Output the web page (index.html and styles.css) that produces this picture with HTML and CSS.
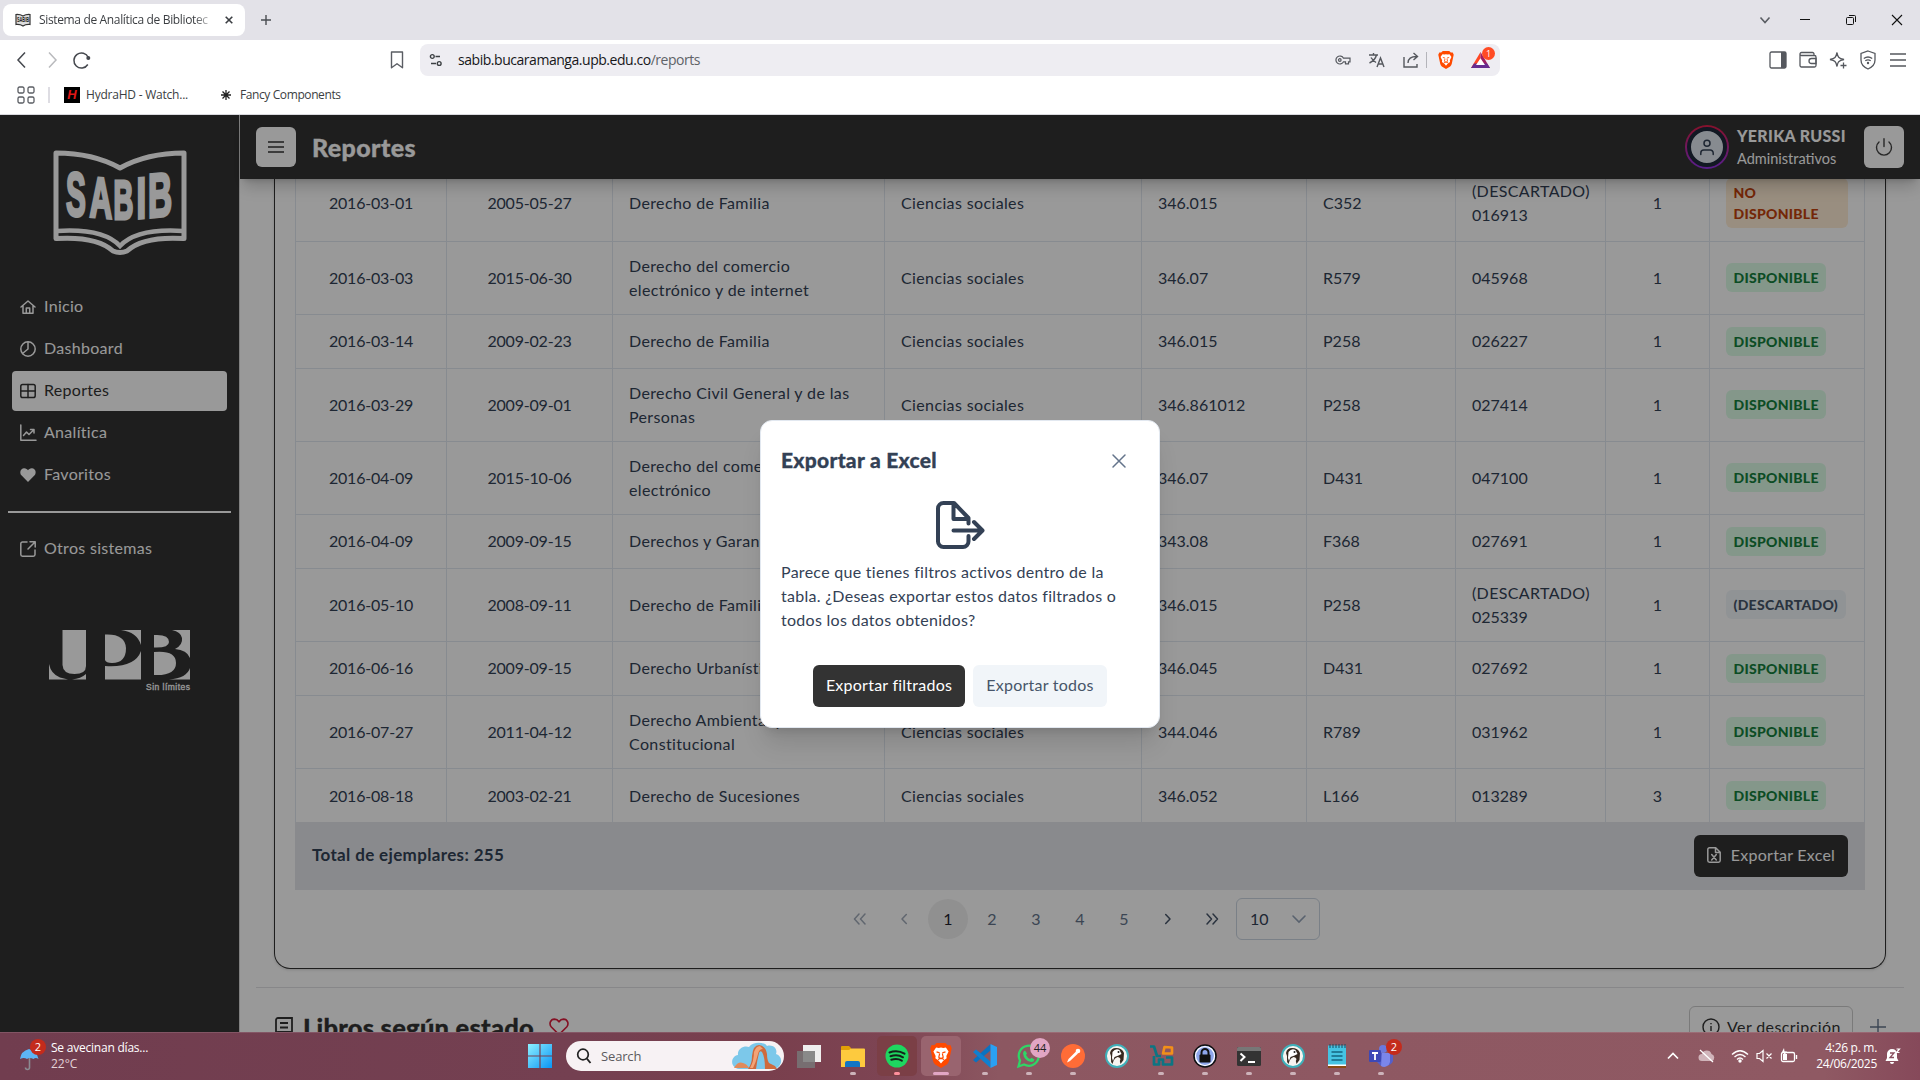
FILE: index.html
```html
<!DOCTYPE html>
<html lang="es">
<head>
<meta charset="utf-8">
<title>Sistema de Analítica de Bibliotecas</title>
<link rel="stylesheet" href="styles.css">
</head>
<body>
<div class="tabstrip">
  <div class="tab">
    <svg class="favicon" width="16" height="14" viewBox="0 0 16 14"><path d="M1 1.500Q5 1.200 8 3Q11 1.200 15 1.500V11.500Q11 11 8 13Q5 11 1 11.500Z" fill="#ddd" stroke="#333" stroke-width="1.200"/><text x="8" y="9.300" font-size="6.500" font-weight="bold" text-anchor="middle" textLength="12" lengthAdjust="spacingAndGlyphs" fill="#222" font-family="Liberation Sans">SABIB</text></svg>
    <span class="tab-title">Sistema de Analítica de Bibliotec</span>
    <svg width="8" height="8" viewBox="0 0 8 8"><path d="M.7.7l6.600 6.600M7.300.7L.7 7.300" stroke="#3b3e42" stroke-width="1.600"/></svg>
  </div>
  <svg class="newtab" width="10" height="10" viewBox="0 0 10 10"><path d="M5 0v10M0 5h10" stroke="#4a4d52" stroke-width="1.400"/></svg>
  <div class="win-controls">
    <svg width="12" height="12" viewBox="0 0 12 12"><path d="M1.500 3.500L6 8.500l4.500-5" fill="none" stroke="#5a5d63" stroke-width="1.600"/></svg>
    <svg width="12" height="12" viewBox="0 0 12 12"><path d="M1 5.500h10" stroke="#111"/></svg>
    <svg width="12" height="12" viewBox="0 0 12 12"><rect x="1.500" y="3.500" width="7" height="7" rx="1" fill="none" stroke="#111"/><path d="M4 1.500h5.500a1 1 0 0 1 1 1V8" fill="none" stroke="#111"/></svg>
    <svg width="12" height="12" viewBox="0 0 12 12"><path d="M1 1l10 10M11 1L1 11" stroke="#111" stroke-width="1.100"/></svg>
  </div>
</div>

<div class="toolbar">
  <div class="nav-btns">
    <svg width="18" height="18" viewBox="0 0 18 18"><path d="M12 1.500L5 9l7 7.500" fill="none" stroke="#45484e" stroke-width="1.500"/></svg>
    <svg width="18" height="18" viewBox="0 0 18 18"><path d="M6 1.500L13 9l-7 7.500" fill="none" stroke="#b9babd" stroke-width="1.500"/></svg>
    <svg width="18" height="18" viewBox="0 0 18 18"><path d="M15.300 6.500A7.500 7.500 0 1 0 14.800 13.500" fill="none" stroke="#45484e" stroke-width="1.500"/><circle cx="15.300" cy="7" r="2" fill="#45484e"/></svg>
  </div>
  <svg class="bookmark" width="14" height="18" viewBox="0 0 14 18"><path d="M1.500 1h11v15.800L7 12.800l-5.500 4z" fill="none" stroke="#5a5d63" stroke-width="1.400" stroke-linejoin="round"/></svg>
  <div class="urlbar">
    <svg width="14" height="14" viewBox="0 0 14 14"><g fill="none" stroke="#3c4043" stroke-width="1.400"><circle cx="3.300" cy="3.500" r="1.900"/><path d="M6.500 3.500H11M2 10.500h5"/><circle cx="10.200" cy="10.500" r="1.900"/></g></svg>
    <span class="url">sabib.bucaramanga.upb.edu.co<i>/reports</i></span>
    <div class="url-icons">
      <svg width="16" height="16" viewBox="0 0 16 16"><g fill="none" stroke="#55585e" stroke-width="1.200"><path d="M8.500 6.200A4 4 0 1 0 8.500 9.800H10.500v2h3v-2h1.500v-3.600z"/><circle cx="4.800" cy="8" r="1.300"/></g></svg>
      <svg width="18" height="16" viewBox="0 0 18 16"><g fill="none" stroke="#55585e" stroke-width="1.400"><path d="M1 3h9M5.500 1v2M8.500 3C7.500 7 4.500 9.500 1.500 11M3 5.500C4.500 8 6.500 9.500 8 10.500M9 15l3.500-9L16 15M10.200 12h4.600"/></g></svg>
      <svg width="16" height="16" viewBox="0 0 16 16"><g fill="none" stroke="#55585e" stroke-width="1.400"><path d="M1 5v10h13v-3M5 11c0-4.500 3-6.500 8.500-6.500M10.500 1l4 3.500-4 3.500"/></g></svg>
      <b></b>
      <svg class="brave" width="16" height="18" viewBox="0 0 24 28"><use href="#lion"/></svg>
      <span class="rewards"><svg width="19" height="18" viewBox="0 0 19 18"><path d="M9.500 1L0 17h4.500l5-9z" fill="#ff4724"/><path d="M9.500 1L19 17h-4.500l-5-9z" fill="#9e1f63"/><path d="M0 17h19l-3-4.500H3z" fill="#662d91"/><path d="M9.500 7.200L5 14h9z" fill="#fff"/></svg><em>1</em></span>
    </div>
  </div>
  <div class="tool-icons">
    <svg width="18" height="18" viewBox="0 0 18 18"><rect x="1" y="1" width="16" height="16" rx="1.500" fill="none" stroke="#55585e" stroke-width="1.300"/><rect x="12" y="1" width="5" height="16" fill="#55585e"/></svg>
    <svg width="18" height="18" viewBox="0 0 18 18"><g fill="none" stroke="#55585e" stroke-width="1.300"><path d="M15 4.500V3a1.500 1.500 0 0 0-1.500-1.500h-11a1.500 1.500 0 0 0 0 3h13A1.500 1.500 0 0 1 17 6v8.500a1.500 1.500 0 0 1-1.500 1.500h-13A1.500 1.500 0 0 1 1 14.500V3"/><path d="M17 7.500h-4.500a2.500 2.500 0 0 0 0 5H17z"/></g></svg>
    <svg width="18" height="18" viewBox="0 0 18 18"><path d="M8 1.500c.7 4.500 1.500 5.800 7 7-3 .6-4.300 1.200-5.300 2.200C8.800 11.800 8.400 13 8 15.500 7 10.500 6 9.500 1 8.500 6 7.500 7 6.500 8 1.500zM14.500 11.500v6M11.500 14.500h6" fill="none" stroke="#55585e" stroke-width="1.300"/></svg>
    <svg width="18" height="20" viewBox="0 0 18 20"><g fill="none" stroke="#55585e" stroke-width="1.300"><path d="M9 1l7 2.500V10c0 4-2.500 7-7 9-4.500-2-7-5-7-9V3.500z"/><path d="M4.800 8.500q4.200-3 8.400 0M6.300 10.800q2.700-2 5.400 0"/></g><circle cx="9" cy="13" r="1.200" fill="#55585e"/></svg>
    <svg width="18" height="18" viewBox="0 0 18 18"><path d="M1 3h16M1 9h16M1 15h16" stroke="#55585e" stroke-width="1.400"/></svg>
  </div>
</div>

<div class="bookmarks">
  <svg width="18" height="18" viewBox="0 0 18 18"><g fill="none" stroke="#5a5d63" stroke-width="1.300"><rect x="1" y="1" width="6" height="6" rx="1.500"/><rect x="11" y="1" width="6" height="6" rx="1.500"/><rect x="1" y="11" width="6" height="6" rx="1.500"/><rect x="11" y="11" width="6" height="6" rx="1.500"/></g></svg>
  <b></b>
  <span class="hydra">H</span>
  <span class="bm-hydra">HydraHD - Watch...</span>
  <svg class="fancy" width="10" height="10" viewBox="0 0 10 10"><path d="M5 0v10M0 5h10M1.500 1.500l7 7M8.500 1.500l-7 7" stroke="#222" stroke-width="1.300"/></svg>
  <span class="bm-fancy">Fancy Components</span>
</div>

<div class="app">
  <aside class="sidebar">
    <svg class="sabib" width="134" height="105" viewBox="0 0 134 105">
      <path d="M3 3Q40 3 67 18Q94 3 131 3V88.500Q90 86 74 101Q67 104 60 101Q44 86 3 88.500Z" fill="none" stroke="#fff" stroke-width="5" stroke-linejoin="round"/>
      <path d="M4 81Q50 78 67 96Q84 78 130 81" fill="none" stroke="#fff" stroke-width="4.500"/>
      <g fill="#fff" font-family="Liberation Sans Narrow, Liberation Sans" font-weight="bold" stroke="#fff" stroke-width="3">
        <text transform="translate(13 65) skewY(5) scale(.48 1)" font-size="62">S</text>
        <text transform="translate(36.500 66.500) skewY(5) scale(.55 1)" font-size="57">A</text>
        <text transform="translate(60.500 69) scale(.5 1)" font-size="55">B</text>
        <text transform="translate(83.500 68.500) skewY(-5) scale(.6 1)" font-size="58">I</text>
        <text transform="translate(95 67.500) skewY(-5) scale(.54 1)" font-size="62">B</text>
      </g>
    </svg>
    <nav>
      <a><svg width="16" height="16" viewBox="0 0 16 16"><g class="ln"><path d="M1 8l7-6 7 6M3 6.500V14.300h10V6.500M6.300 14V9h3.400v5"/></g></svg><span>Inicio</span></a>
      <a><svg width="16" height="16" viewBox="0 0 16 16"><g class="ln"><circle cx="8" cy="8" r="7.200"/><path d="M8 1v7l-5.500 4.500"/></g></svg><span>Dashboard</span></a>
      <a class="active"><svg width="16" height="16" viewBox="0 0 16 16"><g class="ln"><rect x=".8" y="1.500" width="14.400" height="13" rx="1.800"/><path d="M8 1.500v13M1 8h14"/></g></svg><span>Reportes</span></a>
      <a><svg width="16" height="16" viewBox="0 0 16 16"><g class="ln"><path d="M.8 0v15.200H16M3.500 10.500l3-3.500 2.500 2.500 5-5M10.500 4.500H14V8"/></g></svg><span>Analítica</span></a>
      <a><svg width="16" height="16" viewBox="0 0 16 16"><path d="M8 15L1.400 8.300C-.6 6 .2 1.500 4 1.200 6 1.100 7.200 2.200 8 3.200c.8-1 2-2.100 4-2 3.800.3 4.600 4.800 2.600 7.100z" fill="currentColor"/></svg><span>Favoritos</span></a>
      <hr>
      <a><svg width="16" height="16" viewBox="0 0 16 16"><g class="ln"><path d="M7 1H2.500A1.700 1.700 0 0 0 .8 2.700v10.800a1.700 1.700 0 0 0 1.700 1.700h10.800a1.700 1.700 0 0 0 1.700-1.700V9M10 .8h5.200V6M15 1L8 8"/></g></svg><span>Otros sistemas</span></a>
    </nav>
    <svg class="upb" width="142" height="64" viewBox="0 0 142 64">
      <g fill="#fff">
        <path d="M13.500 0H37v36q0 8-11.500 8t-12-9z"/>
        <path d="M0 34q2 10 11 13.500L19 49.500H0zM37 44v5.500H23Q32 48.500 37 44z"/>
        <path d="M56 4.500q20-1 21 13.500 0 15-14 15-6 0-7-3z"/>
        <path d="M72 0H92V15Q88 2 72 0zM92 21V49.500H56V36Q86 38 92 21z"/>
        <path d="M105 5q15-1 15 7 0 6-15 5.500zM105 22q22-2 22 11 0 13-22 12z"/>
        <path d="M123 0H141V28Q138 20 126 19 134 15 133 8 132 2 123 0zM141 38V49.500H120Q138 48 141 38z"/>
      </g>
      <text x="97" y="59.500" font-size="8.500" textLength="44" fill="#fff" stroke="#fff" stroke-width=".3" font-family="Liberation Sans">Sin límites</text>
    </svg>
  </aside>

  <main>
    <header>
      <button class="sq menu"><svg width="16" height="12" viewBox="0 0 16 12"><path d="M0 1h16M0 6h16M0 11h16" stroke="#333" stroke-width="1.400"/></svg></button>
      <h1>Reportes</h1>
      <div class="avatar"><span><svg width="14" height="16" viewBox="0 0 14 16"><g class="ln"><circle cx="7" cy="4.300" r="3"/><path d="M.8 15.500V14a3 3 0 0 1 3-3h6.400a3 3 0 0 1 3 3v1.500"/></g></svg></span></div>
      <div class="who"><strong>YERIKA RUSSI</strong><span>Administrativos</span></div>
      <button class="sq power"><svg width="18" height="18" viewBox="0 0 18 18"><path d="M9 .8v7.700M4 4a7.500 7.500 0 1 0 10 0" fill="none" stroke="#444" stroke-width="1.400" stroke-linecap="round"/></svg></button>
    </header>

    <div class="content">
      <section class="panel">
        <table>
          <colgroup><col class="c1"><col class="c2"><col class="c3"><col class="c4"><col class="c5"><col class="c6"><col class="c7"><col class="c8"><col class="c9"></colgroup>
          <tbody>
          <tr class="first"><td>2016-03-01</td><td>2005-05-27</td><td>Derecho de Familia</td><td>Ciencias sociales</td><td>346.015</td><td>C352</td><td><span class="note">(DESCARTADO)</span> 016913</td><td>1</td><td><span class="tag warn">NO DISPONIBLE</span></td></tr>
          <tr class="two"><td>2016-03-03</td><td>2015-06-30</td><td>Derecho del comercio electrónico y de internet</td><td>Ciencias sociales</td><td>346.07</td><td>R579</td><td>045968</td><td>1</td><td><span class="tag">DISPONIBLE</span></td></tr>
          <tr><td>2016-03-14</td><td>2009-02-23</td><td>Derecho de Familia</td><td>Ciencias sociales</td><td>346.015</td><td>P258</td><td>026227</td><td>1</td><td><span class="tag">DISPONIBLE</span></td></tr>
          <tr class="two"><td>2016-03-29</td><td>2009-09-01</td><td>Derecho Civil General y de las Personas</td><td>Ciencias sociales</td><td>346.861012</td><td>P258</td><td>027414</td><td>1</td><td><span class="tag">DISPONIBLE</span></td></tr>
          <tr class="two"><td>2016-04-09</td><td>2015-10-06</td><td>Derecho del comercio electrónico</td><td>Ciencias sociales</td><td>346.07</td><td>D431</td><td>047100</td><td>1</td><td><span class="tag">DISPONIBLE</span></td></tr>
          <tr><td>2016-04-09</td><td>2009-09-15</td><td>Derechos y Garantías</td><td>Ciencias sociales</td><td>343.08</td><td>F368</td><td>027691</td><td>1</td><td><span class="tag">DISPONIBLE</span></td></tr>
          <tr class="two"><td>2016-05-10</td><td>2008-09-11</td><td>Derecho de Familia</td><td>Ciencias sociales</td><td>346.015</td><td>P258</td><td><span class="note">(DESCARTADO)</span> 025339</td><td>1</td><td><span class="tag gray">(DESCARTADO)</span></td></tr>
          <tr><td>2016-06-16</td><td>2009-09-15</td><td>Derecho Urbanístico</td><td>Ciencias sociales</td><td>346.045</td><td>D431</td><td>027692</td><td>1</td><td><span class="tag">DISPONIBLE</span></td></tr>
          <tr class="two"><td>2016-07-27</td><td>2011-04-12</td><td>Derecho Ambiental y Constitucional</td><td>Ciencias sociales</td><td>344.046</td><td>R789</td><td>031962</td><td>1</td><td><span class="tag">DISPONIBLE</span></td></tr>
          <tr><td>2016-08-18</td><td>2003-02-21</td><td>Derecho de Sucesiones</td><td>Ciencias sociales</td><td>346.052</td><td>L166</td><td>013289</td><td>3</td><td><span class="tag">DISPONIBLE</span></td></tr>
          </tbody>
        </table>
        <div class="tfoot">
          <strong>Total de ejemplares: 255</strong>
          <button class="btn dark excel"><svg width="14" height="16" viewBox="0 0 14 16"><g class="ln"><path d="M.8 2.500V13.500a1.700 1.700 0 0 0 1.700 1.700h9a1.700 1.700 0 0 0 1.700-1.700V5.300L8.700.8H2.500A1.700 1.700 0 0 0 .8 2.500zM8.500 1v4.500H13M4.700 7.500l4.600 5.500M9.300 7.500L4.700 13"/></g></svg><span>Exportar Excel</span></button>
        </div>
        <div class="pager">
          <span class="off"><svg width="14" height="12" viewBox="0 0 14 12"><path d="M6 1L1.500 6 6 11M12 1L7.500 6l4.500 5" class="ln"/></svg></span>
          <span class="off"><svg width="14" height="12" viewBox="0 0 14 12"><path d="M9.300 1.500L5 6l4.300 4.500" class="ln"/></svg></span>
          <span class="cur">1</span><span>2</span><span>3</span><span>4</span><span>5</span>
          <span class="on"><svg width="14" height="12" viewBox="0 0 14 12"><path d="M4.700 1.500L9 6l-4.300 4.500" class="ln"/></svg></span>
          <span class="on"><svg width="14" height="12" viewBox="0 0 14 12"><path d="M2 1l4.500 5L2 11M8 1l4.500 5L8 11" class="ln"/></svg></span>
          <div class="select">10<svg width="14" height="8" viewBox="0 0 14 8"><path d="M1 1l6 6 6-6" fill="none" stroke="#94a3b8" stroke-width="1.600" stroke-linecap="round"/></svg></div>
        </div>
      </section>
      <hr class="sep">
      <div class="next">
        <svg width="18" height="20" viewBox="0 0 18 20"><g fill="none" stroke="#333" stroke-width="1.800"><path d="M1 18V3a2 2 0 0 1 2-2h14v18H3a2 2 0 0 1-2-2 2 2 0 0 1 2-2h14"/><path d="M5 6h8M5 10.500h8"/></g></svg>
        <h2>Libros según estado</h2>
        <svg class="heart" width="20" height="18" viewBox="0 0 22 20"><path d="M11 18.500L2.500 10C-.5 6.500 1.500 1.300 6 1.200c2.500 0 4 1.500 5 3 1-1.500 2.500-3 5-3 4.500.1 6.500 5.300 3.500 8.800z" fill="none" stroke="#dc1c3c" stroke-width="1.800" stroke-linejoin="round"/></svg>
        <button class="desc"><svg width="18" height="18" viewBox="0 0 18 18"><circle cx="9" cy="9" r="8" fill="none" stroke="#333" stroke-width="1.400"/><path d="M9 8v5M9 5v1.200" stroke="#333" stroke-width="1.400"/></svg><span>Ver descripción</span></button>
        <svg class="plus" width="16" height="16" viewBox="0 0 16 16"><path d="M8 0v16M0 8h16" stroke="#64748b" stroke-width="1.400"/></svg>
      </div>
    </div>
  </main>

  <div class="mask">
    <div class="dialog">
      <div class="dlg-head"><h3>Exportar a Excel</h3><span><svg width="14" height="14" viewBox="0 0 14 14"><path d="M1 1l12 12M13 1L1 13" stroke="#64748b" stroke-width="1.500" stroke-linecap="round"/></svg></span></div>
      <svg class="dlg-icon" width="50" height="48" viewBox="0 0 50 48"><g fill="none" stroke="#334155" stroke-width="4" stroke-linecap="round" stroke-linejoin="round"><path d="M33.500 35v5.500a5.500 5.500 0 0 1-5.500 5.500H8.500A5.500 5.500 0 0 1 3 40.500v-33A5.500 5.500 0 0 1 8.500 2H19l14.500 15v5.500M18.500 3v15H33M18.500 29.500H47M39 21l8.500 8.500L39 38"/></g></svg>
      <p>Parece que tienes filtros activos dentro de la<br>tabla. ¿Deseas exportar estos datos filtrados o<br>todos los datos obtenidos?</p>
      <div class="dlg-foot"><button class="btn dark filt">Exportar filtrados</button><button class="btn light">Exportar todos</button></div>
    </div>
  </div>
</div>

<footer class="taskbar">
  <div class="weather">
    <span class="umb"><svg width="20" height="32" viewBox="0 0 20 32"><path d="M9.500 16v11.500a2 2 0 0 1-4 0" fill="none" stroke="#8b8b92" stroke-width="1.600"/><path d="M0 19Q1 11 9 9q8 2 9.500 10-3-2-5 0-4-2-6.500 0Q4 17 0 19z" fill="#5db4f5"/></svg><em class="badge red">2</em></span>
    <div><div class="w1">Se avecinan días...</div><div class="w2">22°C</div></div>
  </div>
  <div class="tasks">
    <svg class="start" width="24" height="24" viewBox="0 0 24 24"><defs><linearGradient id="wg" x2="1" y2="1"><stop offset="0" stop-color="#8df0ff"/><stop offset="1" stop-color="#0a95f5"/></linearGradient></defs><path d="M0 0h11.400v11.400H0zM12.600 0H24v11.400H12.600zM0 12.600h11.400V24H0zM12.600 12.600H24V24H12.600z" fill="url(#wg)"/></svg>
    <div class="search">
      <svg width="16" height="16" viewBox="0 0 16 16"><circle cx="7" cy="6.500" r="5.300" fill="none" stroke="#222" stroke-width="1.700"/><path d="M10.800 10.500L14.500 15" stroke="#222" stroke-width="1.900"/></svg>
      <span>Search</span>
      <svg width="52" height="28" viewBox="0 0 52 28"><path d="M8 27C-2 25 0 14 7 13 6 6 14 3 18 5 22-1 34 0 36 4c6-2 11 3 9 8 7 2 7 12-1 15z" fill="#7cc8ea"/><path d="M3 26q4-7 9-5 4 1 6 5z" fill="#e08a5a"/><path d="M17 27Q21 22 21 14 22 3 28 3q7 1 8 9 0 6 2 9l6 3 2 3H34q0-12-3-17-2-2-3 1-2 8-3 16z" fill="#cf6a3c"/><path d="M23 10q2-6 6-6l3 3q-4 0-5 5-2 8-5 14h-3q4-7 4-16z" fill="#f3a376"/></svg>
    </div>
    <span class="t view"><svg width="24" height="24" viewBox="0 0 24 24"><rect x="6" y="1" width="18" height="17" fill="#efeeee"/><rect x="0" y="7" width="18" height="17" fill="#777" fill-opacity=".85"/></svg></span>
    <span class="t dot"><svg width="24" height="24" viewBox="0 0 24 24"><path d="M0 3a1 1 0 0 1 1-1h7l2 2v3H0z" fill="#e0a007"/><path d="M0 6h8l2-1.500h13a1 1 0 0 1 1 1V23H0z" fill="#fdca3e"/><path d="M4 23v-4a2 2 0 0 1 2-2h11a2 2 0 0 1 2 2v4z" fill="#1275c4"/></svg></span>
    <span class="t dot spot"><svg width="24" height="24" viewBox="0 0 24 24"><circle cx="12" cy="12" r="11.500" fill="#1ed760"/><path d="M4.500 8.500q8-3 15 1.200M5.500 12.300q7-2.300 12.500 1M6.300 15.800q6-1.800 10.500.9" fill="none" stroke="#14221a" stroke-width="2" stroke-linecap="round"/></svg></span>
    <span class="t dot brv"><svg width="22" height="25" viewBox="0 0 24 28"><g id="lion"><path d="M7 0h10l2.500 2.500 3-.3L24 6l-.7 3L21 20q-.6 2.500-2.500 4L12 28l-6.500-4Q3.600 22.500 3 20L.7 9 0 6l1.500-3.800 3 .3z" fill="#ff4a00"/><path d="M6.500 5l3 .6L12 5l2.500.6 3-.6 3 4.500-2.500 5 .3 2.500-3.800 3L12 23l-2.500-3-3.800-3 .3-2.500-2.500-5z" fill="#fff"/><path d="M7 10l3.500 1M17 10l-3.500 1M10.500 12l-1 4L12 17.500l2.500-1.500-1-4M8.500 18.500l3.500-1.500 3.500 1.500" fill="none" stroke="#ff4a00" stroke-width="1.300"/></g></svg></span>
    <span class="t dot"><svg width="24" height="24" viewBox="0 0 24 24"><path d="M17.500 0v6.500L3 18.500 0 16 17.500 0z" fill="#0b72c0"/><path d="M17.500 24v-6.500L3 5.500 0 8z" fill="#0f80d0"/><path d="M17.500 0L24 3v18l-6.500 3z" fill="#2aa0f2"/></svg></span>
    <span class="t dot"><svg width="24" height="24" viewBox="0 0 24 24"><path d="M1.500 22.500l1.500-6a10 10 0 1 1 4 4z" fill="none" stroke="#2fd566" stroke-width="2.300"/><path d="M8 6.500l2 3-1 1.500q1.500 3 4 4l1.500-1.200 3 1.700q-.5 3-3.500 2.500-7-1.500-8-8.500.3-2.500 2-3z" fill="#2fd566"/></svg><em class="badge pink">44</em></span>
    <span class="t dot"><svg width="24" height="24" viewBox="0 0 24 24"><circle cx="12" cy="12" r="12" fill="#ff6c37"/><path d="M6 18.500l1.500-3.500L15 7.500l2 2L9 17z" fill="#fff"/><circle cx="17" cy="7" r="2.300" fill="#fff"/></svg></span>
    <span class="t"><svg width="24" height="24" viewBox="0 0 24 24"><g id="beaver"><circle cx="12" cy="12" r="11" fill="#f7f4f0" stroke="#3fb0ba" stroke-width="1.900"/><path d="M5 9q1-5 6-5 6 0 8 5l-.5 7-3 4q-1.500-3 0-5-1-2-3-2-3 1-4 4l-1 3q-2-2-1.500-5Q6.500 12 5 9z" fill="#35281f"/><path d="M7.500 8q3-4 7-2l2 4-3 1.500-4 1.500-1.500 4-1-3z" fill="#fff"/><circle cx="13.500" cy="8" r="1" fill="#222"/></g></svg></span>
    <span class="t dot"><svg width="24" height="24" viewBox="0 0 24 24"><path d="M1 2.500h4l3 9.500h4M5 12v8.500h5v-5h4v5h9v-7h-6" fill="none" stroke="#0c7583" stroke-width="2.700" stroke-linejoin="round"/><path d="M14 9.500l1.500-6.500 7.500.5V9.500z" fill="none" stroke="#f39019" stroke-width="2.600" stroke-linejoin="round"/></svg></span>
    <span class="t dot"><svg width="24" height="24" viewBox="0 0 24 24"><circle cx="12" cy="12" r="11" fill="#8ea6ec" stroke="#111" stroke-width="1.600"/><circle cx="12" cy="12" r="9.500" fill="none" stroke="#fff" stroke-width="1.200"/><path d="M8.500 11V8.500a3.500 3.500 0 0 1 7 0V11" fill="none" stroke="#111" stroke-width="2"/><rect x="6.500" y="10.500" width="11" height="8" rx="1" fill="#111"/></svg></span>
    <span class="t dot"><svg width="24" height="24" viewBox="0 0 24 24"><rect x="0" y="3" width="24" height="19" rx="1.500" fill="#333"/><path d="M0 4.500A1.500 1.500 0 0 1 1.500 3h21A1.500 1.500 0 0 1 24 4.500V7H0z" fill="#777"/><path d="M3.500 9.500l4 3.500-4 4M11 18h7" fill="none" stroke="#fff" stroke-width="2"/></svg></span>
    <span class="t dot"><svg width="24" height="24" viewBox="0 0 24 24"><use href="#beaver"/></svg></span>
    <span class="t dot"><svg width="24" height="24" viewBox="0 0 24 24"><rect x="3" y="1.500" width="18" height="20" fill="#45c3e2"/><rect x="3" y="20.500" width="18" height="1.500" fill="#fff"/><rect x="3" y="22" width="18" height="2" fill="#8b4a12"/><path d="M5 0v4M8 0v4M11 0v4M14 0v4M17 0v4M20 0v4" stroke="#174d63"/><path d="M6.500 8h11M6.500 12h11M6.500 16h11" stroke="#136480" stroke-width="1.600"/></svg></span>
    <span class="t dot"><svg width="24" height="24" viewBox="0 0 24 24"><circle cx="14" cy="5" r="4" fill="#6a78dd"/><path d="M9 9h15v8a6 6 0 0 1-8 4l-4 1-4-4z" fill="#5560ca"/><path d="M13 9h8v9a6 6 0 0 1-9 4z" fill="#7b86ea"/><rect x="0" y="6" width="12" height="12" rx="1.200" fill="#3d48b6"/><path d="M3 9h6M6 9v7" stroke="#fff" stroke-width="1.800"/></svg><em class="badge red">2</em></span>
  </div>
  <div class="tray">
    <svg width="12" height="8" viewBox="0 0 12 8"><path d="M1 6.500l5-5 5 5" fill="none" stroke="#fff" stroke-width="1.700"/></svg>
    <svg class="cloud" width="18" height="14" viewBox="0 0 18 14"><path d="M4 12a3.500 3.500 0 0 1 0-7 5 5 0 0 1 9.500 0A3.700 3.700 0 0 1 14 12z" fill="#d0b4ba"/><path d="M2 1l13 12" stroke="#fff" stroke-width="1.300"/></svg>
    <svg class="wifi" width="18" height="14" viewBox="0 0 18 14"><g fill="none" stroke="#fff" stroke-width="1.400"><path d="M1 5.500q8-7.500 16 0M3.500 8q5.500-5 11 0M6 10.500q3-2.800 6 0"/></g><circle cx="9" cy="12" r="1.700" fill="#fff"/></svg>
    <svg class="vol" width="16" height="14" viewBox="0 0 16 14"><path d="M1 4.500h2.500L7 1.500v11L3.500 9.500H1zM10.500 4.500l5 5M15.500 4.500l-5 5" fill="none" stroke="#fff" stroke-width="1.200"/></svg>
    <svg class="bat" width="18" height="16" viewBox="0 0 18 16"><rect x="1.500" y="4.500" width="13" height="9" rx="1.500" fill="none" stroke="#fff" stroke-width="1.300"/><path d="M16.500 7v4" stroke="#fff" stroke-width="1.400"/><path d="M3 6h4v6H3z" fill="#fff"/><path d="M4 0L1.500 5H4L3 9l4-5.500H4.500z" fill="#fff"/></svg>
    <div class="clock"><div>4:26 p. m.</div><div>24/06/2025</div></div>
    <svg class="bell" width="16" height="16" viewBox="0 0 16 16"><path d="M7 1a5 5 0 0 0-5 5v4L.5 13h13L12 10V6q-.5-5-5-5z" fill="#fff"/><path d="M5 14a2 2 0 0 0 4 0z" fill="#fff"/><path d="M5 5h4L5 9.500h4" fill="none" stroke="#8a5060" stroke-width="1.300"/><path d="M11.500 1h3l-3 3.500h3" fill="none" stroke="#fff" stroke-width="1.200"/></svg>
  </div>
</footer>
</body>
</html>
```
FILE: styles.css
```css
* { box-sizing: border-box; }
body { margin: 0; width: 1920px; height: 1080px; overflow: hidden; display: flex; flex-direction: column; background: #fff; font-family: Lato, "Open Sans", sans-serif; font-size: 16px; line-height: 24px; color: #334155; }
svg { display: block; flex: none; overflow: visible; }
em, i { font-style: normal; }
button { font: inherit; border: 0; margin: 0; }
h1, h2, h3, p { margin: 0; }
h1, h2, h3 { -webkit-text-stroke: .3px currentColor; }
.ln { fill: none; stroke: currentColor; stroke-width: 1.500; stroke-linecap: round; stroke-linejoin: round; }

.tabstrip { height: 40px; flex: none; background: #e3e2e8; display: flex; align-items: center; padding-left: 3px; font-family: "Open Sans", sans-serif; }
.tab { width: 242px; height: 32px; background: #fff; border-radius: 8px; display: flex; align-items: center; padding: 0 12px; gap: 8px; }
.tab-title { flex: 1; min-width: 0; margin-right: 2px; overflow: hidden; white-space: nowrap; font-size: 12px; color: #3b3e42; letter-spacing: -.35px; mask-image: linear-gradient(90deg, #000 88%, transparent); }
.newtab { margin-left: 16px; }
.win-controls { margin-left: auto; display: flex; gap: 34px; padding-right: 17px; }
.win-controls svg:first-child { margin-right: -6px; }

.toolbar { height: 40px; flex: none; display: flex; align-items: center; padding-left: 13px; }
.nav-btns { display: flex; gap: 12px; }
.bookmark { margin-left: 299px; }
.urlbar { margin-left: 16px; width: 1080px; height: 32px; border-radius: 8px; background: #eeedf2; display: flex; align-items: center; padding-left: 9px; gap: 15px; font-family: "Open Sans", sans-serif; font-size: 14px; color: #16171a; }
.url { letter-spacing: -.46px; }
.url i { color: #5f6368; }
.url-icons { margin-left: auto; display: flex; align-items: center; padding-right: 10px; }
.url-icons svg { margin-right: 17px; }
.url-icons svg:nth-child(3) { margin-right: 7px; }
.url-icons b { width: 1px; height: 16px; background: #b4b4ba; margin-right: 11px; }
.url-icons .rewards { position: relative; }
.url-icons .rewards svg { margin: 0; }
.rewards em { position: absolute; left: 11px; top: -4px; width: 13px; height: 13px; border-radius: 50%; background: #ff4b24; color: #fff; font-size: 9px; line-height: 13px; text-align: center; }
.tool-icons { margin-left: auto; display: flex; align-items: center; gap: 12px; padding-right: 13px; }

.bookmarks { height: 35px; flex: none; border-bottom: 1px solid #d9d9de; display: flex; align-items: center; padding: 0 0 4px 17px; font-family: "Open Sans", sans-serif; font-size: 12px; color: #3b3e42; }
.bookmarks b { width: 2px; height: 16px; background: #dedde3; margin: 0 14px 0 13px; }
.hydra { width: 16px; height: 16px; background: #000; color: #e01818; font: italic bold 13px/16px "Liberation Sans", sans-serif; text-align: center; margin-right: 6px; }
.bm-hydra { letter-spacing: -.22px; width: 135px; }
.bm-fancy { margin-left: 9px; letter-spacing: -.4px; }

.app { position: relative; height: 917px; flex: none; display: flex; overflow: hidden; }
.sidebar { width: 240px; flex: none; background: #333; border-right: 1px solid #d6d6d6; padding: 35px 8px 0; color: #fff; }
.sabib { margin: 0 0 32px 45px; }
nav { display: flex; flex-direction: column; gap: 2px; }
nav a { height: 40px; margin: 0 4px; padding-left: 8px; display: flex; align-items: center; gap: 8px; border-radius: 4px; }
nav a span { padding-bottom: 2px; letter-spacing: .3px; }
nav a.active { background: #fff; color: #333; }
nav hr { width: 223px; height: 2px; border: 0; background: #fff; margin: 14px 0 14px; }
.upb { margin: 61px 0 0 41px; }

main { flex: 1; min-width: 0; display: flex; flex-direction: column; }
header { height: 64px; flex: none; background: #333; display: flex; align-items: center; padding: 0 16px; color: #fff; box-shadow: 0 10px 15px -3px rgba(0,0,0,.2), 0 4px 6px -4px rgba(0,0,0,.2); position: relative; z-index: 1; }
.sq { width: 40px; height: 40px; border-radius: 6px; background: #fff; display: flex; align-items: center; justify-content: center; padding: 0; }
h1 { font-size: 25px; font-weight: 900; margin-left: 16px; letter-spacing: .4px; }
.avatar { margin-left: auto; width: 44px; height: 44px; border-radius: 50%; background: linear-gradient(#e11d48, #9333ea); padding: 2px; }
.avatar span { width: 40px; height: 40px; border-radius: 50%; background: #e2e8f0; border: 4px solid #1e293b; display: flex; align-items: center; justify-content: center; color: #334155; }
.who { margin-left: 8px; width: 111px; display: flex; flex-direction: column; font-size: 14.500px; line-height: 23px; white-space: nowrap; }
.who strong { font-size: 16px; font-weight: 900; letter-spacing: .3px; }
.power { height: 42px; margin-left: 16px; }

.content { flex: 1; min-height: 0; padding: 0 16px; }
.panel { display: flow-root; margin: 0 18px; height: 790px; border: 1px solid #333; border-top: 0; border-radius: 0 0 16px 16px; padding: 0 20px; box-shadow: 0 1px 3px rgba(0,0,0,.15); }
table { margin-top: -14px; width: 1570px; table-layout: fixed; border-collapse: separate; border-spacing: 0; border-left: 1px solid #e2e8f0; }
td { height: 54px; padding: 0 16px; border: solid #e2e8f0; border-width: 0 1px 1px 0; vertical-align: middle; }
.two td { height: 73px; }
.first td { height: 77px; }
td { padding-bottom: 1px; }
tr:last-child td { border-bottom: 0; }
td:nth-child(1), td:nth-child(2), td:nth-child(8) { text-align: center; }
td:nth-child(1), td:nth-child(2) { letter-spacing: -.2px; }
td:nth-child(3), td:nth-child(4) { letter-spacing: .37px; }
.note { letter-spacing: .35px; }
.c1 { width: 151px; } .c2 { width: 166px; } .c3 { width: 272px; } .c4 { width: 257px; } .c5 { width: 165px; } .c6 { width: 149px; } .c7 { width: 150px; } .c8 { width: 104px; } .c9 { width: 155px; }
.tag { display: inline-block; vertical-align: middle; padding: 4px 7.500px; border-radius: 6px; font-size: 14px; line-height: 21px; font-weight: 900; letter-spacing: .28px; background: #dcfce7; color: #15803d; white-space: nowrap; }
.tag.warn { background: #ffedd5; color: #c2410c; white-space: normal; }
.tag.gray { background: #f1f5f9; color: #475569; }
.tfoot { width: 1570px; height: 68px; margin-top: -1px; background: #e5e7eb; display: flex; align-items: center; justify-content: space-between; padding: 0 17px; }
.tfoot strong { font-size: 17px; letter-spacing: .35px; padding-bottom: 2px; }
.btn { height: 42px; border-radius: 6px; padding: 0 13px 2px; display: flex; align-items: center; justify-content: center; white-space: nowrap; letter-spacing: .24px; }
.dark { background: #333; color: #fff; }
.light { background: #f1f5f9; color: #475569; }
.excel { width: 154px; gap: 10px; }
.pager { display: flex; align-items: center; justify-content: center; gap: 4px; padding-top: 8px; height: 50px; color: #64748b; }
.pager > span { width: 40px; height: 40px; border-radius: 50%; display: flex; align-items: center; justify-content: center; }
.pager .off { opacity: .6; }
.pager .cur { background: #f1f1f1; color: #1e1e2e; }
.pager .on { color: #475569; }
.select { width: 84px; height: 42px; border: 1px solid #cbd5e1; border-radius: 6px; display: flex; align-items: center; justify-content: space-between; padding: 0 13px; color: #334155; }
.sep { border: 0; height: 1px; background: #e2e2e4; margin: 18px 0; }
.next { display: flex; align-items: center; padding: 0 18px 0 19px; height: 42px; color: #333; }
h2 { font-size: 25.500px; font-weight: 900; margin: 0 15px 0 10px; white-space: nowrap; letter-spacing: .25px; }
.desc { margin-left: auto; width: 164px; height: 42px; border: 1px solid #ccc; border-radius: 6px; background: none; color: #333; padding: 0 12px; display: flex; align-items: center; gap: 7px; white-space: nowrap; letter-spacing: .4px; }
.plus { margin-left: 17px; }

.mask { position: absolute; inset: 0; background: rgba(0,0,0,.4); z-index: 5; display: flex; align-items: center; justify-content: center; }
.dialog { width: 400px; height: 308px; background: #fff; border: 1px solid #e2e8f0; border-radius: 12px; padding: 20px; box-shadow: 0 20px 25px -5px rgba(0,0,0,.12), 0 8px 10px -6px rgba(0,0,0,.12); }
.dlg-head { height: 40px; display: flex; align-items: center; justify-content: space-between; }
.dlg-head span { width: 40px; display: flex; justify-content: center; }
h3 { font-size: 21px; font-weight: 900; letter-spacing: .28px; padding-bottom: 1px; }
.dlg-icon { margin: 20px auto 11px; }
.dialog p { white-space: nowrap; letter-spacing: .28px; }
.dlg-foot { margin-top: 33px; display: flex; justify-content: center; gap: 8px; }
.filt { width: 152px; }
.dlg-foot .light { width: 134px; }

.taskbar { height: 48px; flex: none; display: flex; align-items: center; padding-bottom: 1px; background: linear-gradient(90deg, #713d4f 0, #744051 30%, #793f4d 40%, #7d4453 46%, #8c5761 52%, #8e5862 70%, #8f5963 95%, #86495a 100%); color: #fff; font-family: "Open Sans", sans-serif; font-size: 12px; box-shadow: inset 0 1px rgba(255,255,255,.12); }
.weather { display: flex; align-items: center; padding-left: 20px; gap: 11px; line-height: 16px; width: 528px; }
.umb, .t { position: relative; }
.w1 { letter-spacing: -.22px; }
.w2 { color: #e3d3d8; }
.badge { position: absolute; height: 16px; min-width: 16px; border-radius: 8px; font-size: 11px; line-height: 16px; text-align: center; }
.red { background: #c42b1c; right: -6px; top: -1px; }
.pink { background: #e2a6c4; color: #222; width: 20px; height: 20px; line-height: 20px; border-radius: 50%; right: -1px; top: 2px; }
.tasks { display: flex; align-items: center; }
.search { margin: 0 4px 0 14px; width: 218px; height: 30px; border-radius: 15px; background: #f7f2f4; display: flex; align-items: center; padding: 0 1px 0 10px; color: #5c5a5e; font-size: 13px; letter-spacing: -.15px; }
.search span { flex: 1; margin-left: 9px; }
.t { width: 40px; height: 40px; margin-right: 4px; border-radius: 5px; display: flex; align-items: center; justify-content: center; }
.t.view { margin-left: 1px; }
.dot::after { content: ""; position: absolute; left: 17px; bottom: 1px; width: 6px; height: 3px; border-radius: 2px; background: #cdb3ba; }
.spot { background: #7b3f46; }
.spot::after { background: #ff8f9c; }
.brv { background: #99646f; }
.brv::after { left: 12px; width: 16px; background: #e2a6c4; }
.t .red { right: -1px; top: 3px; }
.tray { margin-left: auto; display: flex; align-items: center; padding-right: 19px; line-height: 16px; }
.cloud { margin-left: 19px; }
.wifi { margin-left: 15px; }
.vol { margin-left: 7px; }
.bat { margin-left: 8px; }
.clock { width: 66px; margin: 0 8px 0 13px; text-align: right; font-size: 12px; letter-spacing: -.3px; }
```
